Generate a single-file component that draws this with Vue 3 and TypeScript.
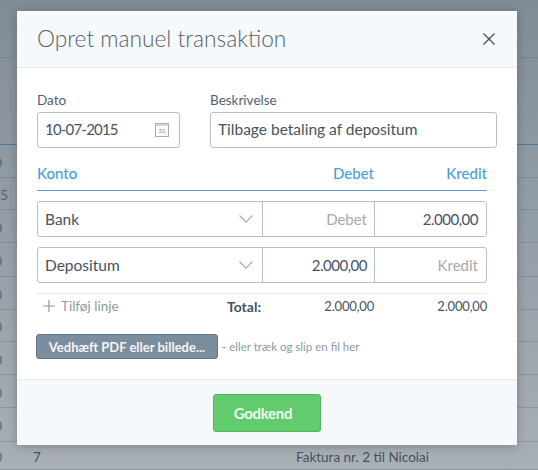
<template>
  <div class="page">
    <div class="bg-table">
      <div v-for="r in bgRows" :key="r.top" class="bg-row" :class="{ blue: r.blue }" :style="{ height: r.h + 'px' }">
        <span class="bg-edge" :style="{ width: r.edgeEnd + 'px' }"><span>{{ r.edge }}</span></span>
        <span class="bg-num" :style="{ marginLeft: 33 - r.edgeEnd + 'px' }">{{ r.num }}</span>
        <span class="bg-text">{{ r.text }}</span>
      </div>
    </div>

    <div class="backdrop">
      <div class="modal">
        <header class="modal-head">
          <h1>Opret manuel transaktion</h1>
          <svg class="close" width="12" height="12" viewBox="0 0 12 12">
            <path d="M0.5 0.5 L11.5 11.5 M11.5 0.5 L0.5 11.5" stroke="#46535f" stroke-width="1.3" fill="none" />
          </svg>
        </header>

        <div class="modal-body">
          <div class="top-fields">
            <div class="field date-field">
              <label>Dato</label>
              <div class="input">
                <span class="num">10-07-2015</span>
                <svg class="cal" width="14" height="14" viewBox="0 0 14 14">
                  <rect x="0.5" y="0.5" width="13" height="13" fill="#fbfcfc" stroke="#a6aeb5" />
                  <rect x="1" y="1" width="12" height="2" fill="#d3d7db" />
                  <text x="7" y="10" text-anchor="middle" font-size="6" fill="#8d959c">31</text>
                </svg>
              </div>
            </div>
            <div class="field desc-field">
              <label>Beskrivelse</label>
              <div class="input"><span>Tilbage betaling af depositum</span></div>
            </div>
          </div>

          <div class="lines-head">
            <span class="col-account">Konto</span>
            <span class="col-amount">Debet</span>
            <span class="col-amount">Kredit</span>
          </div>

          <div class="lines">
            <div v-for="l in lines" :key="l.account" class="line">
              <div class="cell cell-account">
                <span>{{ l.account }}</span>
                <svg width="14" height="8" viewBox="0 0 14 8">
                  <path d="M0.5 0.5 L7 7.2 L13.5 0.5" stroke="#a3abb2" stroke-width="1.1" fill="none" />
                </svg>
              </div>
              <div class="cell cell-amount" :class="l.debet ? 'num' : 'empty'">{{ l.debet || 'Debet' }}</div>
              <div class="cell cell-amount" :class="l.kredit ? 'num' : 'empty'">{{ l.kredit || 'Kredit' }}</div>
            </div>
          </div>

          <div class="totals">
            <span class="add">
              <svg width="12" height="12" viewBox="0 0 12 12">
                <path d="M6 0 V12 M0 6 H12" stroke="#8e98a1" stroke-width="1.2" fill="none" />
              </svg>
              Tilføj linje
            </span>
            <span class="total-label">Total:</span>
            <span class="total-val">2.000,00</span>
            <span class="total-val last">2.000,00</span>
          </div>

          <div class="attach">
            <button class="attach-btn">Vedhæft PDF eller billede...</button>
            <span class="attach-hint">- eller træk og slip en fil her</span>
          </div>
        </div>

        <footer class="modal-foot">
          <button class="approve">Godkend</button>
        </footer>
      </div>
    </div>
  </div>
</template>

<script setup lang="ts">
interface Line {
  account: string
  debet: string
  kredit: string
}

interface BgRow {
  top: number
  h: number
  edge: string
  edgeEnd: number
  num: string
  text: string
  blue?: boolean
}

const lines: Line[] = [
  { account: 'Bank', debet: '', kredit: '2.000,00' },
  { account: 'Depositum', debet: '2.000,00', kredit: '' }
]

const row = (top: number, h: number, edge = '0', edgeEnd = 2, num = '', text = ''): BgRow => ({
  top, h, edge, edgeEnd, num, text
})

const bgRows: BgRow[] = [
  row(0, 58, '', 2),
  { ...row(58, 87, '', 2), blue: true },
  row(145, 33),
  row(178, 32, '1,5', 8),
  row(210, 33),
  row(243, 34),
  row(277, 33),
  row(310, 32),
  row(342, 33),
  row(375, 33),
  row(408, 34),
  row(442, 28, '0', 2, '7', 'Faktura nr. 2 til Nicolai')
]
</script>

<style>
html, body { margin: 0; padding: 0; }
</style>

<style scoped>
.page {
  position: relative;
  width: 538px;
  height: 470px;
  overflow: hidden;
  font-family: "Lato", "Noto Sans", sans-serif;
  color: #46535f;
  background: linear-gradient(180deg, #7f8b95 0, #8b96a0 120px, #a8afb5 470px);
}

.bg-row {
  box-sizing: border-box;
  display: flex;
  align-items: center;
  padding-top: 3px;
  border-bottom: 1px solid rgba(100, 112, 122, 0.35);
  font-size: 13.5px;
  color: #47525c;
}
.bg-row.blue { border-bottom-color: #4f7896; }
.bg-edge {
  display: flex;
  justify-content: flex-end;
  white-space: nowrap;
  opacity: 0.75;
}
.bg-num { width: 263px; }

.backdrop {
  position: absolute;
  inset: 0;
  padding: 11px 21px 0 17px;
}

.modal {
  width: 500px;
  height: 434px;
  display: flex;
  flex-direction: column;
  background: #fff;
  border-radius: 2px;
  box-shadow: 0 1px 10px rgba(30, 40, 50, 0.3);
}

.modal-head {
  height: 57px;
  box-sizing: border-box;
  display: flex;
  align-items: center;
  justify-content: space-between;
  padding: 0 22px 1px 20px;
  background: #f6f9fb;
  border-bottom: 1px solid #e6ebef;
}
.modal-head h1 {
  margin: 0;
  font-size: 22.7px;
  font-weight: 300;
  color: #55616c;
}

.modal-body {
  flex: 1;
  padding: 22px 30px 0 20px;
}

.top-fields {
  display: flex;
  gap: 30px;
  width: 460px;
}
.field label {
  display: block;
  margin-bottom: 1px;
  font-size: 13.5px;
  line-height: 21px;
  color: #55616c;
}
.date-field { width: 143px; }
.desc-field { width: 287px; }

.input {
  box-sizing: border-box;
  height: 36px;
  display: flex;
  align-items: center;
  justify-content: space-between;
  padding: 0 10px 2px 7px;
  border: 1px solid #b5bfc7;
  border-radius: 3px;
  font-size: 15.5px;
  color: #46535f;
}
.input .cal { margin-top: 2px; }

.num {
  font-size: 15px;
  letter-spacing: -0.5px;
}
.input .num { letter-spacing: -0.8px; }

.lines-head {
  display: flex;
  margin-top: 12px;
  height: 31px;
  padding-bottom: 4px;
  box-sizing: border-box;
  align-items: center;
  border-bottom: 1px solid #5f9fd0;
  font-size: 15px;
  font-weight: 500;
  color: #4a9edb;
}
.col-account { width: 225px; }
.col-amount { width: 112px; text-align: right; }
.lines-head .col-amount + .col-amount { width: 113px; }

.lines {
  display: flex;
  flex-direction: column;
  gap: 10px;
  margin-top: 10px;
}
.line {
  display: flex;
  height: 36px;
  box-sizing: border-box;
  border: 1px solid #b5bfc7;
  border-radius: 3px;
  font-size: 15.5px;
}
.cell {
  display: flex;
  align-items: center;
  box-sizing: border-box;
  padding-bottom: 1px;
}
.cell-account {
  width: 225px;
  justify-content: space-between;
  padding-left: 7px;
  padding-right: 9px;
  border-right: 1px solid #b5bfc7;
}
.cell-amount {
  width: 112px;
  justify-content: flex-end;
  padding-right: 7px;
  border-right: 1px solid #b5bfc7;
}
.cell-amount:last-child { flex: 1; padding-right: 8px; border-right: 0; }
.cell-amount.empty { font-size: 15px; color: #a9a9a9; }

.totals {
  display: flex;
  align-items: center;
  margin-top: 10px;
  height: 28px;
  padding-bottom: 3px;
  box-sizing: border-box;
  border-top: 1px solid #e6ebef;
  font-size: 13px;
  letter-spacing: -0.2px;
}
.add {
  display: flex;
  align-items: center;
  gap: 6px;
  width: 190px;
  padding-left: 6px;
  box-sizing: border-box;
  font-size: 13.5px;
  letter-spacing: 0;
  color: #8e98a1;
}
.total-label { width: 35px; font-size: 14px; font-weight: 700; letter-spacing: 0; }
.total-val { width: 112px; text-align: right; }
.total-val.last { width: 113px; }

.attach {
  display: flex;
  align-items: center;
  gap: 4px;
  margin-top: 13px;
  margin-left: -1px;
}
.attach-btn {
  width: 182px;
  height: 25px;
  padding: 0;
  background: #7b8e9e;
  border: 1px solid #62748a;
  border-radius: 3px;
  font: 700 13px "Lato", sans-serif;
  color: #f3f5f6;
}
.attach-hint { font-size: 11.5px; color: #8e98a1; }

.modal-foot {
  height: 66px;
  box-sizing: border-box;
  display: flex;
  justify-content: center;
  padding-top: 14px;
  background: #f6f9fb;
  border-top: 1px solid #e6ebef;
}
.approve {
  width: 108px;
  height: 38px;
  padding: 0 8px 0 0;
  background: #62cb6e;
  border: 1px solid #53b45f;
  border-radius: 3px;
  font: 700 15px "Lato", sans-serif;
  letter-spacing: -0.3px;
  color: #eefbf0;
}
</style>
